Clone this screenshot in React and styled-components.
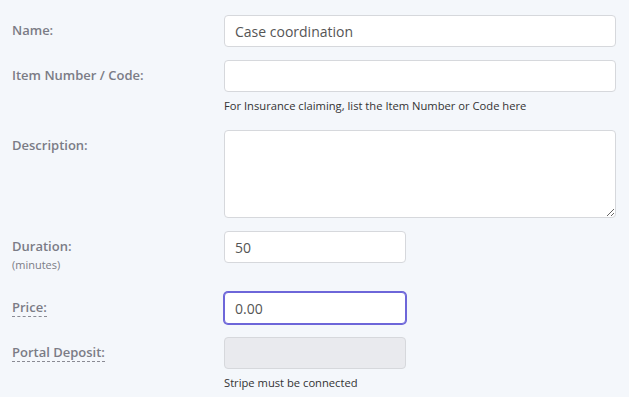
import styled, { createGlobalStyle } from "styled-components";

const GlobalStyle = createGlobalStyle`
  html, body {
    margin: 0;
    background: #f4f7fb;
    font-family: "Open Sans", "Noto Sans", sans-serif;
  }
`;

const Form = styled.div`
  padding: 15px 13px 0 12px;
  display: flex;
  flex-direction: column;
  gap: 13px;
`;

const Row = styled.div`
  display: grid;
  grid-template-columns: 212px 1fr;
  align-items: start;
`;

const LabelCell = styled.div`
  padding: 7px 0 7px;
  display: flex;
  flex-direction: column;
  gap: 2px;
`;

const Label = styled.span`
  font-size: 13px;
  font-weight: 600;
  color: #7b7c86;
  line-height: 17px;
  align-self: flex-start;
  border-bottom: ${(p) => (p.$hint ? "1px dashed #8a8b94" : "none")};
`;

const SubLabel = styled.span`
  font-size: 11px;
  color: #7b7c86;
  line-height: 15px;
`;

const Field = styled.div`
  display: flex;
  flex-direction: column;
  gap: 7px;
`;

const Input = styled.input`
  box-sizing: border-box;
  width: ${(p) => p.$width || "100%"};
  height: 32px;
  padding: 0 10px;
  font-family: inherit;
  font-size: 14px;
  color: #555;
  background: ${(p) => (p.disabled ? "#e9eaee" : "#fff")};
  border: 1px solid ${(p) => (p.$focused ? "#6d66d9" : "#d6d8dc")};
  box-shadow: ${(p) => (p.$focused ? "0 0 0 1px #6d66d9" : "none")};
  border-radius: 4px;
  outline: none;
`;

const TextArea = styled.textarea`
  box-sizing: border-box;
  width: 100%;
  height: 88px;
  padding: 6px 10px;
  font-family: inherit;
  font-size: 14px;
  color: #555;
  background: #fff;
  border: 1px solid #d6d8dc;
  border-radius: 4px;
  outline: none;
  display: block;
`;

const Help = styled.div`
  font-size: 11.2px;
  color: #333;
  line-height: 14px;
  margin-bottom: 4px;
`;

export default function App() {
  return (
    <>
      <GlobalStyle />
      <Form>
        <Row>
          <LabelCell><Label>Name:</Label></LabelCell>
          <Input defaultValue="Case coordination" />
        </Row>
        <Row>
          <LabelCell><Label>Item Number / Code:</Label></LabelCell>
          <Field>
            <Input />
            <Help>For Insurance claiming, list the Item Number or Code here</Help>
          </Field>
        </Row>
        <Row>
          <LabelCell><Label>Description:</Label></LabelCell>
          <TextArea />
        </Row>
        <Row>
          <LabelCell>
            <Label>Duration:</Label>
            <SubLabel>(minutes)</SubLabel>
          </LabelCell>
          <Input $width="182px" defaultValue="50" />
        </Row>
        <Row>
          <LabelCell><Label $hint>Price:</Label></LabelCell>
          <Input $width="182px" $focused defaultValue="0.00" />
        </Row>
        <Row>
          <LabelCell><Label $hint>Portal Deposit:</Label></LabelCell>
          <Field>
            <Input $width="182px" disabled />
            <Help>Stripe must be connected</Help>
          </Field>
        </Row>
      </Form>
    </>
  );
}
